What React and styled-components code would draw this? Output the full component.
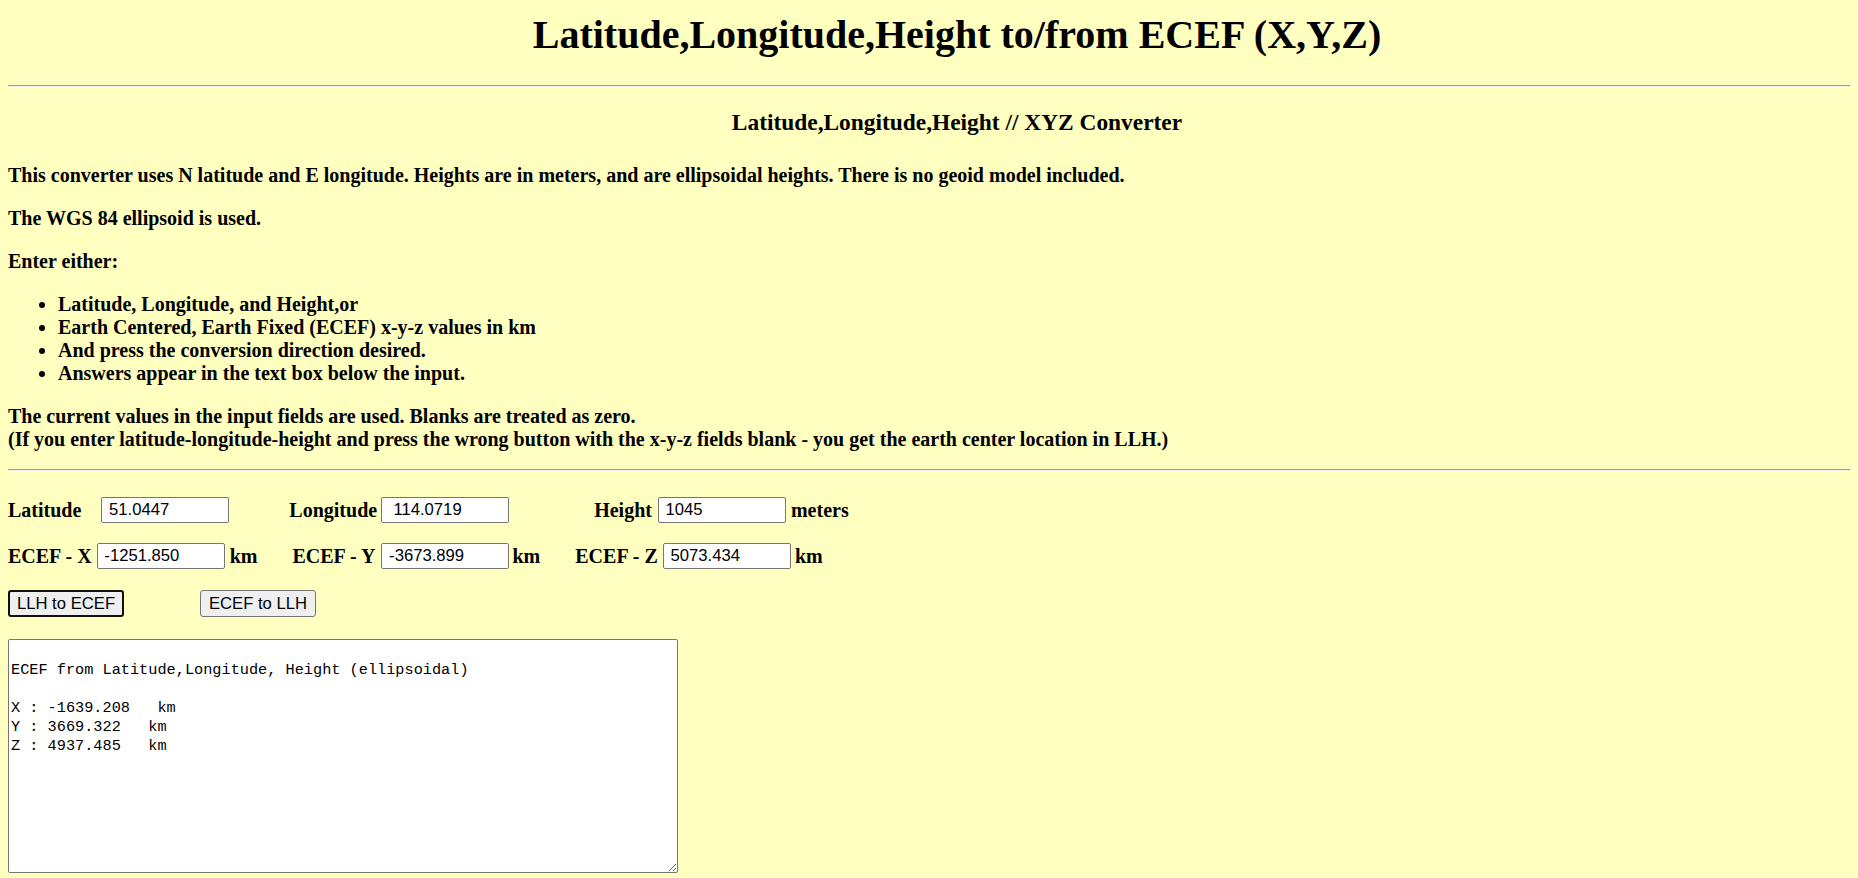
import styled, { createGlobalStyle } from "styled-components";

const GlobalStyle = createGlobalStyle`
  html, body {
    background: #ffffc0;
    overflow-x: hidden;
  }
  body {
    margin: 8px;
    color: #000;
    font-family: "Liberation Serif", "Times New Roman", serif;
    font-size: 20px;
    font-weight: bold;
  }
`;

const Title = styled.h1`
  margin: 3px 0 27px;
  padding-left: 56px;
  text-align: center;
  font-size: 40px;
  font-weight: bold;
`;

const Rule = styled.hr`
  margin: 0;
  border: 0;
  border-top: 1px solid #9a9a9a;
  border-bottom: 1px solid #eeeeee;
  height: 0;
`;

const SubTitle = styled.h3`
  margin: 22px 0 27.5px;
  padding-left: 56px;
  text-align: center;
  font-size: 23.4px;
`;

const Para = styled.p`
  margin: 20px 0 ${(p) => p.$mb ?? 20}px;
`;

const List = styled.ul`
  margin: 20px 0;
  padding-left: 50px;
`;

const Form = styled.form`
  display: flex;
  flex-direction: column;
  gap: 20px;
  padding-top: 26px;
`;

const Row = styled.div`
  display: flex;
  align-items: center;
  height: 26px;
`;

const Label = styled.span`
  margin-left: ${(p) => p.$ml || 0}px;
  white-space: pre;
`;

const Field = styled.input`
  box-sizing: border-box;
  width: 128px;
  height: 26px;
  margin-left: ${(p) => p.$ml || 0}px;
  padding: 1px 2px;
  border: 1px solid #767676;
  border-radius: 2px;
  background: #fff;
  font-family: "Liberation Sans", Arial, sans-serif;
  font-size: 16.67px;
  color: #000;
`;

const ButtonRow = styled.div`
  display: flex;
  gap: 76px;
  margin-top: 1px;
`;

const Button = styled.button`
  box-sizing: border-box;
  width: 116px;
  height: 27px;
  padding: 1px 6px;
  border: ${(p) => (p.$focused ? "2px solid #101010" : "1px solid #767676")};
  border-radius: 3px;
  background: #efefef;
  font-family: "Liberation Sans", Arial, sans-serif;
  font-size: 16.67px;
  color: #000;
`;

const Output = styled.textarea`
  box-sizing: border-box;
  width: 670px;
  height: 234px;
  margin-top: 2px;
  padding: 2px;
  border: 1px solid #767676;
  border-radius: 2px;
  background: #fff;
  font-family: "Liberation Mono", "Courier New", monospace;
  font-size: 15.25px;
  line-height: 19px;
  color: #000;
`;

const result = `
ECEF from Latitude,Longitude, Height (ellipsoidal)

X : -1639.208   km
Y : 3669.322   km
Z : 4937.485   km`;

export default function App() {
  return (
    <>
      <GlobalStyle />
      <Title>Latitude,Longitude,Height to/from ECEF (X,Y,Z)</Title>
      <Rule />
      <SubTitle>Latitude,Longitude,Height // XYZ Converter</SubTitle>
      <Para>
        This converter uses N latitude and E longitude. Heights are in meters, and are ellipsoidal heights. There is no
        geoid model included.
      </Para>
      <Para>The WGS 84 ellipsoid is used.</Para>
      <Para>Enter either:</Para>
      <List>
        <li>Latitude, Longitude, and Height,or</li>
        <li>Earth Centered, Earth Fixed (ECEF) x-y-z values in km</li>
        <li>And press the conversion direction desired.</li>
        <li>Answers appear in the text box below the input.</li>
      </List>
      <Para $mb={18.5}>
        The current values in the input fields are used. Blanks are treated as zero.
        <br />
        (If you enter latitude-longitude-height and press the wrong button with the x-y-z fields blank - you get the
        earth center location in LLH.)
      </Para>
      <Rule />
      <Form onSubmit={(e) => e.preventDefault()}>
        <Row>
          <Label>Latitude</Label>
          <Field $ml={20} defaultValue=" 51.0447" />
          <Label $ml={60}>Longitude</Label>
          <Field $ml={4} defaultValue="  114.0719" />
          <Label $ml={85}>Height</Label>
          <Field $ml={6} defaultValue=" 1045" />
          <Label $ml={5}>meters</Label>
        </Row>
        <Row>
          <Label>ECEF - X</Label>
          <Field $ml={5} defaultValue=" -1251.850" />
          <Label $ml={5}>km</Label>
          <Label $ml={35}>ECEF - Y</Label>
          <Field $ml={6} defaultValue=" -3673.899" />
          <Label $ml={3}>km</Label>
          <Label $ml={35}>ECEF - Z</Label>
          <Field $ml={5} defaultValue=" 5073.434" />
          <Label $ml={4}>km</Label>
        </Row>
        <ButtonRow>
          <Button type="button" $focused>
            LLH to ECEF
          </Button>
          <Button type="button">ECEF to LLH</Button>
        </ButtonRow>
        <Output defaultValue={result} />
      </Form>
    </>
  );
}
